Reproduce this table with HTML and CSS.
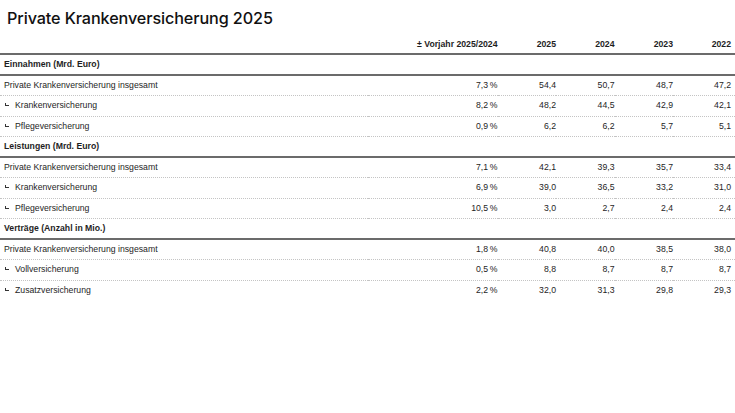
FILE: index.html
```html
<!DOCTYPE html>
<html lang="de">
<head>
<meta charset="utf-8">
<link rel="stylesheet" href="styles.css">
</head>
<body>
<h1 class="title">Private Krankenversicherung 2025</h1>
<table class="data">
  <thead>
    <tr class="head">
      <th class="label"></th>
      <th class="change">± Vorjahr 2025/2024</th>
      <th class="num">2025</th>
      <th class="num">2024</th>
      <th class="num">2023</th>
      <th class="num">2022</th>
    </tr>
  </thead>
  <tbody>
    <tr class="section"><td colspan="6">Einnahmen (Mrd. Euro)</td></tr>
    <tr><td class="label">Private Krankenversicherung insgesamt</td><td class="change">7,3&#8201;%</td><td class="num">54,4</td><td class="num">50,7</td><td class="num">48,7</td><td class="num">47,2</td></tr>
    <tr><td class="label sub"><span class="mark"></span>Krankenversicherung</td><td class="change">8,2&#8201;%</td><td class="num">48,2</td><td class="num">44,5</td><td class="num">42,9</td><td class="num">42,1</td></tr>
    <tr><td class="label sub"><span class="mark"></span>Pflegeversicherung</td><td class="change">0,9&#8201;%</td><td class="num">6,2</td><td class="num">6,2</td><td class="num">5,7</td><td class="num">5,1</td></tr>
    <tr class="section"><td colspan="6">Leistungen (Mrd. Euro)</td></tr>
    <tr><td class="label">Private Krankenversicherung insgesamt</td><td class="change">7,1&#8201;%</td><td class="num">42,1</td><td class="num">39,3</td><td class="num">35,7</td><td class="num">33,4</td></tr>
    <tr><td class="label sub"><span class="mark"></span>Krankenversicherung</td><td class="change">6,9&#8201;%</td><td class="num">39,0</td><td class="num">36,5</td><td class="num">33,2</td><td class="num">31,0</td></tr>
    <tr><td class="label sub"><span class="mark"></span>Pflegeversicherung</td><td class="change">10,5&#8201;%</td><td class="num">3,0</td><td class="num">2,7</td><td class="num">2,4</td><td class="num">2,4</td></tr>
    <tr class="section"><td colspan="6">Verträge (Anzahl in Mio.)</td></tr>
    <tr><td class="label">Private Krankenversicherung insgesamt</td><td class="change">1,8&#8201;%</td><td class="num">40,8</td><td class="num">40,0</td><td class="num">38,5</td><td class="num">38,0</td></tr>
    <tr><td class="label sub"><span class="mark"></span>Vollversicherung</td><td class="change">0,5&#8201;%</td><td class="num">8,8</td><td class="num">8,7</td><td class="num">8,7</td><td class="num">8,7</td></tr>
    <tr class="last"><td class="label sub"><span class="mark"></span>Zusatzversicherung</td><td class="change">2,2&#8201;%</td><td class="num">32,0</td><td class="num">31,3</td><td class="num">29,8</td><td class="num">29,3</td></tr>
  </tbody>
</table>
</body>
</html>
```
FILE: styles.css
```css
html, body {
  margin: 0;
  padding: 0;
  background: #ffffff;
}
body {
  font-family: "Liberation Sans", Arial, sans-serif;
  color: #1e1e1e;
}
.title {
  margin: 0;
  padding: 8px 7px 7px;
  font-family: Inter, "Liberation Sans", sans-serif;
  font-size: 16.2px;
  line-height: 20px;
  font-weight: 500;
  color: #111111;
  letter-spacing: -0.1px;
}
.data {
  width: 735px;
  border-collapse: separate;
  border-spacing: 0;
  font-size: 8.7px;
  table-layout: fixed;
}
.data th, .data td {
  padding: 0;
  white-space: nowrap;
}
.head th {
  line-height: 18px;
  font-weight: bold;
  border-bottom: 2px solid #6b6b6b;
  text-align: right;
}
.data .label { width: auto; text-align: left; padding-left: 4px; }
.data .change { width: 130px; text-align: right; }
.data .num { width: 58.5px; text-align: right; }
.data .num:last-child { padding-right: 4px; width: 58px; }
.section td {
  line-height: 18.5px;
  font-weight: bold;
  padding-left: 4px;
  border-bottom: 2px solid #6b6b6b;
}
tbody tr:not(.section) td {
  line-height: 19.5px;
  border-bottom: 1px dotted #c4c4c4;
}
tbody tr.last td { border-bottom: 1px solid transparent; }
.data .label.sub { padding-left: 5px; }
.mark {
  display: inline-block;
  width: 3px;
  height: 2px;
  border-left: 1px solid #333;
  border-bottom: 1px solid #333;
  margin-right: 6px;
  vertical-align: 2px;
}
```
